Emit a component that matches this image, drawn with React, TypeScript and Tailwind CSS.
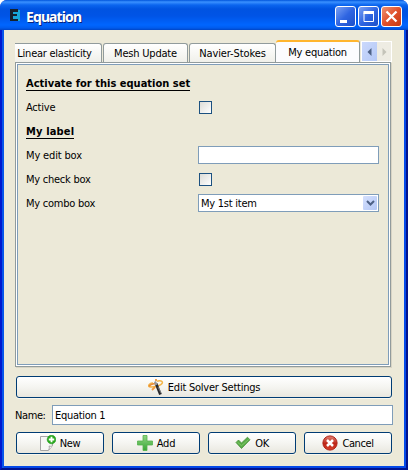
import type { ReactNode } from "react";

function CheckBox() {
  return <span className="ml-px block size-[13px] border border-[#1c5180] bg-linear-to-br from-[#dcdcd7] to-white" />;
}

function Row({ label, children }: { label: ReactNode; children?: ReactNode }) {
  return (
    <div className="flex h-6 items-center">
      <div className="w-[172px] shrink-0">{label}</div>
      {children}
    </div>
  );
}

function Button({ children, className = "" }: { children: ReactNode; className?: string }) {
  return (
    <button
      className={`flex h-[22px] items-center justify-center rounded-[3px] border border-[#003c74] bg-linear-to-b from-white via-[#f5f5f1] to-[#e9e7df] shadow-[0_1px_0_#f8f6ee] ${className}`}
    >
      {children}
    </button>
  );
}

function Tab({ children, className = "" }: { children: ReactNode; className?: string }) {
  return (
    <div
      className={`flex h-[19px] items-center justify-center rounded-t-[3px] border border-b-0 border-[#919b9c] bg-linear-to-b from-white to-[#f0f0ea] ${className}`}
    >
      {children}
    </div>
  );
}

function LogoIcon() {
  return (
    <svg width="10" height="13" viewBox="0 0 10 13" className="mr-[6px] shrink-0">
      <path d="M1 1h9v11H1z" fill="#18a9d8" />
      <path d="M0 0h8v3H3v2h4v2H3v3h5v2H0z" fill="#16232d" />
    </svg>
  );
}

function WandIcon() {
  return (
    <svg width="16" height="16" viewBox="0 0 16 16" className="mr-1">
      <path d="M5 4C2 4 0 6 1 7.500c2 1 7 0 10-1 3-1 4-3 3-4-1-1-4-1-5 0" fill="none" stroke="#f4b64b" strokeWidth="1.500" />
      <path d="M1 7.500c1-2 3-2.500 6-3" fill="none" stroke="#ea8b35" strokeWidth="1.500" />
      <path d="M8 4.500 12.500 15.500" stroke="#28282b" strokeWidth="2.800" />
      <path d="M7 2.500 8.300 6" stroke="#999" strokeWidth="2.200" />
      <path d="M8 0v2M4 11l3-3" stroke="#ef9a40" strokeWidth="1.800" />
      <path d="m10 8 3 6" stroke="#999" strokeWidth=".7" />
    </svg>
  );
}

function NewIcon() {
  return (
    <svg width="16" height="16" viewBox="0 0 16 16" className="mr-1">
      <path d="M.5 1.500h12v9l-4 5h-8z" fill="#f7f7f6" stroke="#a5a5a5" />
      <path d="M8.500 15c1-1 1-3 .5-4 1 .5 3 .3 3.500-.5" fill="#fff" stroke="#999" strokeWidth=".8" />
      <circle cx="11.500" cy="4.500" r="4.300" fill="#2cab20" stroke="#159414" strokeWidth=".6" />
      <path d="M11.500 1.800v5.400M8.800 4.500h5.400" stroke="#fff" strokeWidth="1.800" />
    </svg>
  );
}

function AddIcon() {
  return (
    <svg width="16" height="16" viewBox="0 0 16 16" className="mr-1">
      <defs>
        <linearGradient id="plus" x2="0" y2="1">
          <stop stopColor="#91d683" />
          <stop offset="1" stopColor="#38a536" />
        </linearGradient>
      </defs>
      <path d="M6 .5h4V6h5.500v4H10v5.500H6V10H.5V6H6z" fill="url(#plus)" stroke="#55b24c" strokeWidth=".8" />
    </svg>
  );
}

function OkIcon() {
  return (
    <svg width="16" height="16" viewBox="0 0 16 16" className="mr-1">
      <path d="M1 7.500 3.500 5 6.500 8 12.500 2.200 15 4.800 6.500 13.500z" fill="#57ac45" stroke="#479139" strokeWidth=".8" strokeLinejoin="round" />
      <path d="m2.500 7.200 4 3.500L13.500 4.500" fill="none" stroke="#82c76c" />
    </svg>
  );
}

function CancelIcon() {
  return (
    <svg width="16" height="16" viewBox="0 0 16 16" className="mr-1">
      <defs>
        <linearGradient id="cancel" x2="0" y2="1">
          <stop stopColor="#e48475" />
          <stop offset=".55" stopColor="#bd2416" />
          <stop offset="1" stopColor="#d8432c" />
        </linearGradient>
      </defs>
      <circle cx="8" cy="8" r="7.100" fill="url(#cancel)" stroke="#ae2014" />
      <path d="m5 5 6 6M11 5l-6 6" stroke="#fff" strokeWidth="2.500" />
    </svg>
  );
}

function CaptionButton({ children, close = false }: { children: ReactNode; close?: boolean }) {
  return (
    <div
      className={`flex size-[21px] items-center justify-center rounded-[3px] border border-white bg-linear-to-br ${
        close ? "from-[#ee9170] via-[#e0502b] to-[#c63a12]" : "from-[#7ba0f2] via-[#2f65e2] to-[#1c50c9]"
      }`}
    >
      <svg width="19" height="19" viewBox="0 0 19 19">
        {children}
      </svg>
    </div>
  );
}

export default function App() {
  return (
    <div className="flex h-[470px] w-[408px] flex-col overflow-hidden bg-white font-['DejaVu_Sans_Condensed','DejaVu_Sans',sans-serif] text-[11px] leading-[13px] whitespace-nowrap text-black [font-stretch:condensed]">
      <div className="flex h-[470px] flex-col rounded-t-[7px] bg-[#0831d9]">
        <header className="flex h-[30px] shrink-0 items-center rounded-t-[7px] bg-[linear-gradient(to_bottom,#0054dc_0px,#3a91ff_2px,#0b65ef_5px,#0053e1_9px,#0054e6_16px,#0066ff_25px,#005bed_28px,#0045c5_30px)] pr-[6px] pl-[10px]">
          <LogoIcon />
          <div className="grow pt-[4px] font-['Noto_Sans',sans-serif] text-[14px] leading-4 font-bold tracking-[-0.9px] text-white [text-shadow:1px_1px_0_#07247d]">
            Equation
          </div>
          <div className="flex gap-[2px] pt-[3px]">
            <CaptionButton>
              <path d="M4 13h7v3H4z" fill="white" />
            </CaptionButton>
            <CaptionButton>
              <path d="M5 5.500h9.500v9H5z" fill="none" stroke="white" />
              <path d="M4.500 4h10.500v3H4.500z" fill="white" />
            </CaptionButton>
            <CaptionButton close>
              <path d="m4.500 4.500 10 10M14.500 4.500l-10 10" stroke="white" strokeWidth="2.300" />
            </CaptionButton>
          </div>
        </header>

        <main className="flex h-[440px] flex-col border-x-2 border-b-2 border-r-[#00128c] border-b-[#00138f] border-l-[#0019cf] bg-[#ece9d8] pt-[11px] pr-[13px] pl-[13px] shadow-[inset_2px_0_#0855ea,inset_-2px_0_#0449e8,inset_0_-2px_#0449e8]">
          <div className="flex h-[21px] items-end">
            <Tab className="w-[87px] rounded-tl-none border-l-0 pr-[7px]"><span className="tracking-[-0.25px]">Linear elasticity</span></Tab>
            <Tab className="ml-px w-[85px]"><span className="tracking-[-0.2px]">Mesh Update</span></Tab>
            <Tab className="ml-px w-[87px]"><span className="tracking-[-0.1px]">Navier-Stokes</span></Tab>
            <div className="flex h-[22px] w-[84px] items-center justify-center rounded-t-[3px] border-t-2 border-r border-t-[#ffb52e] border-r-[#919b9c] bg-[#fcfcfe]">
              <span className="tracking-[-0.25px]">My equation</span>
            </div>
            <div className="ml-px flex h-[21px] w-[31px] border border-white">
              <div className="flex w-[15px] items-center justify-center bg-linear-to-br from-[#cbd9fc] to-[#b4c8f6]">
                <svg width="5" height="8" viewBox="0 0 5 8"><path d="M4.500 0v8L.5 4z" fill="#4d6185" /></svg>
              </div>
              <div className="flex w-[14px] items-center justify-center bg-[#eeece3]">
                <svg width="5" height="8" viewBox="0 0 5 8"><path d="M.5 0v8l4-4z" fill="#c4c3b9" /></svg>
              </div>
            </div>
          </div>
          <section className="h-[305px] w-[376px] shrink-0 border border-[#919b9c] bg-white p-px shadow-[1px_1px_0_#d8d4c4]">
            <div className="h-full border border-[#7f9db9] bg-[#ece9d8] pt-[6px] pl-[8px]">
              <Row label={<span className="border-b border-black font-bold tracking-[0.01px]">Activate for this equation set</span>} />
              <Row label={<span className="tracking-[-0.2px]">Active</span>}><CheckBox /></Row>
              <Row label={<span className="border-b border-black font-bold tracking-[0.15px]">My label</span>} />
              <Row label={<span className="tracking-[-0.15px]">My edit box</span>}>
                <div className="h-[18px] w-[181px] border border-[#7f9db9] bg-white" />
              </Row>
              <Row label={<span className="tracking-[-0.25px]">My check box</span>}><CheckBox /></Row>
              <Row label={<span className="tracking-[-0.25px]">My combo box</span>}>
                <div className="flex h-[18px] w-[181px] items-center justify-between border border-[#7f9db9] bg-white pr-px pl-[2px]">
                  <span className="tracking-[-0.25px]">My 1st item</span>
                  <span className="flex h-[14px] w-[14px] items-center justify-center rounded-[1px] bg-linear-to-br from-[#d5e0fd] to-[#b3c7f5]">
                    <svg width="9" height="7" viewBox="0 0 9 7"><path d="m1 1 3.500 3.500L8 1" fill="none" stroke="#4d6185" strokeWidth="2" /></svg>
                  </span>
                </div>
              </Row>
            </div>
          </section>
          <Button className="mt-[9px] ml-px w-[376px] shrink-0"><WandIcon /><span className="tracking-[-0.24px]">Edit Solver Settings</span></Button>
          <div className="mt-[7px] flex h-5 w-[378px] shrink-0 items-center">
            <span className="w-[37px] tracking-[-0.4px]">Name:</span>
            <div className="flex h-5 grow items-center border border-[#7f9db9] bg-white pl-[2px] tracking-[-0.3px]">Equation 1</div>
          </div>
          <div className="mt-[7px] ml-px flex gap-2">
            <Button className="w-[88px]"><NewIcon /><span className="tracking-[-0.3px]">New</span></Button>
            <Button className="w-[88px]"><AddIcon /><span className="tracking-[-0.2px]">Add</span></Button>
            <Button className="w-[88px]"><OkIcon /><span className="tracking-[-0.5px]">OK</span></Button>
            <Button className="w-[88px]"><CancelIcon /><span className="tracking-[-0.4px]">Cancel</span></Button>
          </div>
        </main>
      </div>
    </div>
  );
}
